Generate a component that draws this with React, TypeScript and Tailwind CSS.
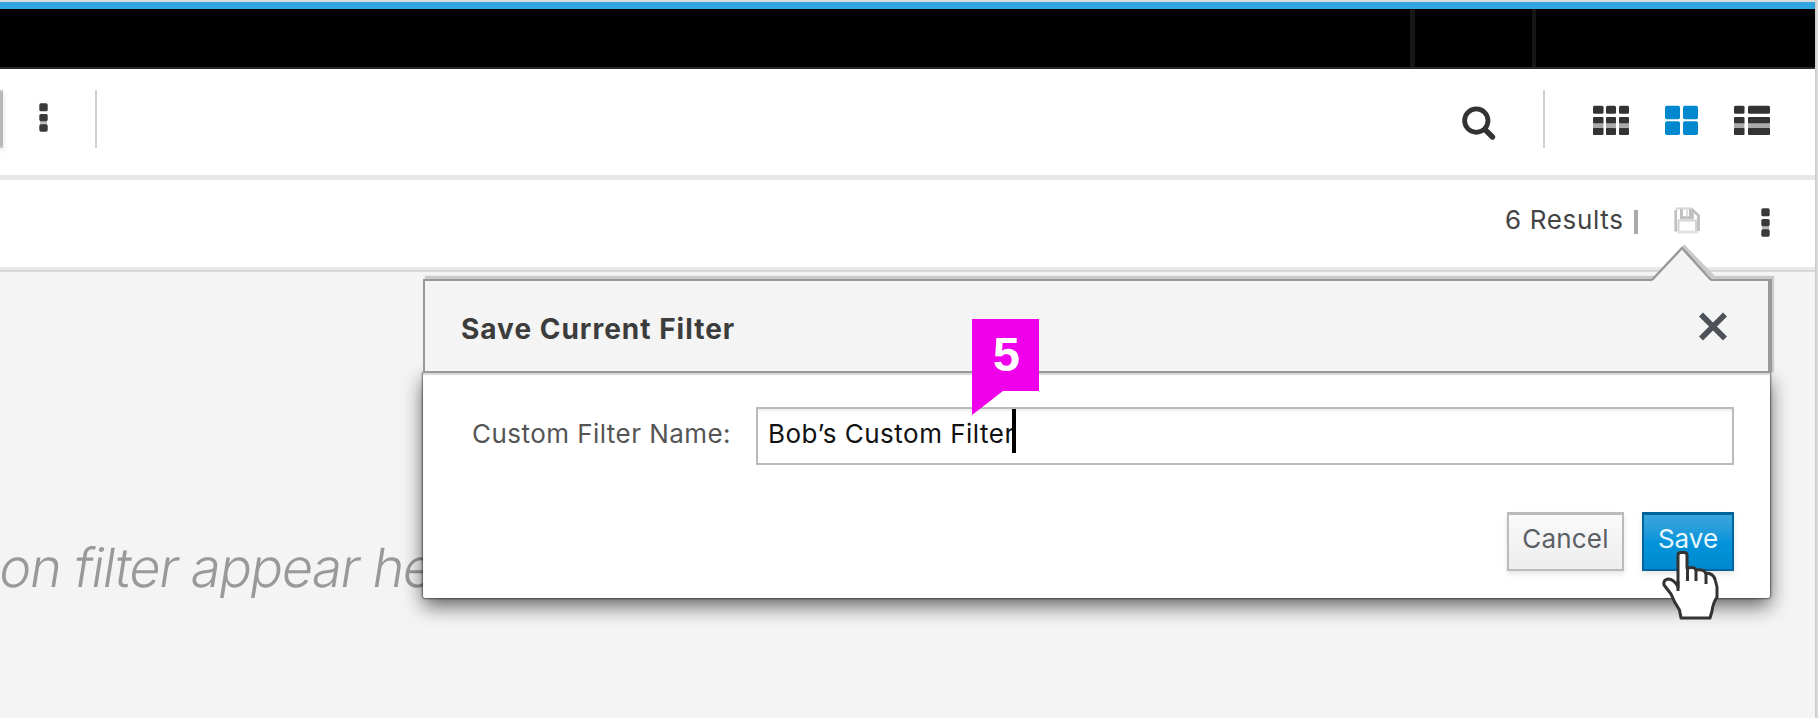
function Kebab({ className = '' }: { className?: string }) {
  return (
    <svg className={`shrink-0 ${className}`} width="9" height="30" viewBox="0 0 9 30" fill="#3a3a3a">
      <rect x="1" y="16" width="7" height="6" fill="#bbb" />
      <rect x="0.3" y="0.3" width="8.4" height="8" rx="1.6" />
      <rect x="0.3" y="11" width="8.4" height="7.2" rx="1.6" />
      <rect x="0.3" y="21.3" width="8.4" height="7.4" rx="1.6" />
    </svg>
  );
}

function SearchIcon() {
  return (
    <svg className="shrink-0" width="35" height="36" viewBox="0 0 35 36" fill="none" stroke="#333">
      <circle cx="14.3" cy="15.6" r="11.7" strokeWidth="4.8" />
      <path d="M23 24.5L30.5 32" strokeWidth="5.4" strokeLinecap="round" />
    </svg>
  );
}

function IconRows({ columns }: { columns: number[][] }) {
  return (
    <svg width="36" height="30" viewBox="0 0 36 30">
      {columns.map(([x, w]) => (
        <g key={x}>
          <rect x={x} y="17" width={w} height="8" fill="#aaa" />
          <rect x={x} y="0.8" width={w} height="8" rx="1.5" fill="#333" />
          <rect x={x} y="12" width={w} height="6.3" rx="1" fill="#333" />
          <rect x={x} y="23" width={w} height="7" rx="1" fill="#333" />
        </g>
      ))}
    </svg>
  );
}

function CardsIcon() {
  return (
    <svg width="33" height="30" viewBox="0 0 33 30" fill="#0088ce">
      <rect x="0" y="0.7" width="15" height="13.5" rx="1.8" />
      <rect x="18" y="0.7" width="15" height="13.5" rx="1.8" />
      <rect x="0" y="16.2" width="15" height="13.8" rx="1.8" />
      <rect x="18" y="16.2" width="15" height="13.8" rx="1.8" />
    </svg>
  );
}

function SaveIcon() {
  return (
    <svg width="27" height="27" viewBox="0 0 27 27" fill="none" stroke="#c0c0c0">
      <path d="M3 25H24" stroke="#e2e2e2" strokeWidth="3" />
      <path d="M1.7 24.5V3" strokeWidth="2.6" />
      <path d="M1.5 1.5H18" stroke="#d8d8d8" strokeWidth="2.2" />
      <path d="M17.5 2L24.5 8.5V24" strokeWidth="2.8" />
      <path d="M4.5 24V13.5H22V24" stroke="#d4d4d4" strokeWidth="2" />
      <path d="M7.5 2V10.8H18.3V2" strokeWidth="3" />
      <path d="M13 2V9" stroke="#e0e0e0" strokeWidth="2" />
      <path d="M16 2V10" strokeWidth="2.2" />
    </svg>
  );
}

function HandCursor() {
  return (
    <svg className="absolute left-[1662px] top-[551px]" width="57" height="69" viewBox="0 0 57 69">
      <path
        d="M16 4Q16 1.5 19 1.5H22Q25 1.5 25 4V17Q33 15.5 34 19Q42 18 43.5 22Q52 22 53.5 30L55 36V46Q51 52 50 60L48 67H19L17.5 59Q12 51 9 43L2 34Q1 29 6 28Q12 28 16 36Z"
        fill="#fff"
        stroke="#333"
        strokeWidth="3"
        strokeLinejoin="round"
      />
      <path d="M16 30V40M25.5 17V30M34 19V30M44 22V33" stroke="#333" strokeWidth="3" fill="none" />
    </svg>
  );
}

export default function App() {
  return (
    <div className="relative flex h-[718px] w-[1818px] overflow-hidden bg-[#dcdcdc] font-['Inter',sans-serif]">
      <div className="flex h-full w-[1815px] flex-col pt-[2px]">
        <div className="h-[7px] shrink-0 bg-[#32a4e0]" />
        <div className="flex h-[60px] shrink-0 border-b-2 border-[#2b2829] bg-black">
          <div className="ml-[1410px] w-[5px] bg-[#171717]" />
          <div className="ml-[117px] w-[4px] bg-[#171717]" />
        </div>

        <div className="flex h-[111px] shrink-0 items-start border-b-[5px] border-[#e8e8e8] bg-white pt-[21px]">
          <div className="h-[58px] w-[3px] shrink-0 border-y-2 border-[#c8c8c8] bg-[#b8b8b8] shadow-[1px_3px_5px_rgba(0,0,0,0.12)]" />
          <Kebab className="ml-[36px] mt-[13px]" />
          <div className="ml-[47px] h-[58px] w-[2px] shrink-0 bg-[#d1d1d1]" />
          <div className="ml-auto mt-[15px]">
            <SearchIcon />
          </div>
          <div className="ml-[46px] h-[58px] w-[2px] shrink-0 bg-[#d1d1d1]" />
          <div className="ml-[48px] mr-[45px] mt-[15px] flex gap-9">
            <IconRows
              columns={[
                [0, 10.5],
                [13, 10],
                [26, 10],
              ]}
            />
            <CardsIcon />
            <IconRows
              columns={[
                [0, 10.5],
                [14, 22],
              ]}
            />
          </div>
        </div>

        <div className="flex h-[90px] shrink-0 items-start border-b-[3px] border-[#e8e8e8] bg-white">
          <div className="ml-[1505px] mt-[20px] h-[40px] w-[129px] whitespace-nowrap text-[26px] leading-[40px] tracking-[0.65px] text-[#444]">
            6 Results
          </div>
          <div className="mt-[30px] h-[24px] w-[4px] bg-[#aaa]" />
          <div className="ml-[36px] mt-[27px]">
            <SaveIcon />
          </div>
          <Kebab className="ml-[60px] mt-[28px]" />
        </div>

        <div className="flex-1 border-t-2 border-[#d8d8d8] bg-[#f4f4f4] pt-[266px]">
          <div className="w-[600px] origin-left -skew-x-[9deg] whitespace-nowrap text-[54px] font-light leading-[60px] tracking-[-1.35px] text-[#999]">
            on filter appear he
          </div>
        </div>
      </div>
      <div className="h-full w-[3px] bg-gradient-to-r from-[#c8c8c8] to-[#e0e0e0]" />

      <div className="absolute left-[423px] top-[279px] h-[319px] w-[1347px]">
        <div className="absolute inset-x-0 bottom-0 top-[94px] rounded-b-[3px] shadow-[0_8px_20px_rgba(0,0,0,0.6),0_0_2px_1px_rgba(0,0,0,0.5)]" />
        <div className="relative flex h-[94px] items-start border-2 border-[#999] bg-[#f4f4f4] shadow-[2px_0_0_0_#999,3px_-2px_1px_1px_#cacaca]">
          <div className="ml-[36px] mt-[28px] whitespace-nowrap text-[28px] font-bold leading-[40px] tracking-[1px] text-[#3c3c3c]">
            Save Current Filter
          </div>
          <svg className="ml-auto mr-[40px] mt-[31px]" width="30" height="29" viewBox="0 0 30 29">
            <path d="M3 2.5L27 26.5M27 2.5L3 26.5" stroke="#4d5258" strokeWidth="5.6" />
          </svg>
        </div>
        <div className="relative h-[225px] rounded-b-[3px] bg-white pt-[34px] shadow-[inset_0_2px_1px_#d8d8d8]">
          <div className="flex h-[58px]">
            <label className="ml-[49px] w-[284px] whitespace-nowrap text-[26px] leading-[53px] tracking-[0.45px] text-[#555]">
              Custom Filter Name:
            </label>
            <div className="flex h-[58px] w-[978px] border-2 border-[#bbb] pl-[10px] shadow-[inset_0_2px_2px_#eee]">
              <span className="w-[244px] whitespace-nowrap text-[26px] leading-[49px] tracking-[0.5px] text-[#111]">
                Bob’s Custom Filter
              </span>
              <div className="h-[44px] w-[4px] bg-black" />
            </div>
          </div>
          <div className="mr-[36px] mt-[47px] flex justify-end gap-[18px]">
            <button className="h-[59px] w-[117px] border-2 border-t-[3px] border-[#bbb] bg-gradient-to-b from-[#fafafa] to-[#ededed] pb-[6px] text-[26px] leading-[40px] tracking-[0.2px] text-[#5a5f65] shadow-[0_3px_5px_rgba(0,0,0,0.1)]">
              Cancel
            </button>
            <button className="h-[59px] w-[92px] border-2 border-t-[3px] border-[#00659c] bg-gradient-to-b from-[#39a5dc] via-[#0394db] to-[#0088ce] pb-[6px] text-[26px] leading-[40px] text-[#e8f5fc] shadow-[0_3px_5px_rgba(0,0,0,0.1)]">
              Save
            </button>
          </div>
        </div>
      </div>

      <svg className="absolute left-[1648px] top-[243px]" width="70" height="40" viewBox="0 0 70 40">
        <path d="M35 3L66 35" fill="none" stroke="#cacaca" strokeWidth="4" />
        <path d="M4 40V37L34 5L63 37V40Z" fill="#f4f4f4" />
        <path d="M4 37L34 5L63 37" fill="none" stroke="#999" strokeWidth="2.4" />
      </svg>

      <svg className="absolute left-[972px] top-[319px]" width="67" height="97" viewBox="0 0 67 97">
        <path d="M0 0H67V72H31L0 96Z" fill="#f000ea" />
      </svg>
      <div className="absolute left-[973px] top-[318px] h-[72px] w-[67px] text-center font-['Liberation_Sans'] text-[49px] font-bold leading-[72px] text-white">
        5
      </div>
      <HandCursor />
    </div>
  );
}
